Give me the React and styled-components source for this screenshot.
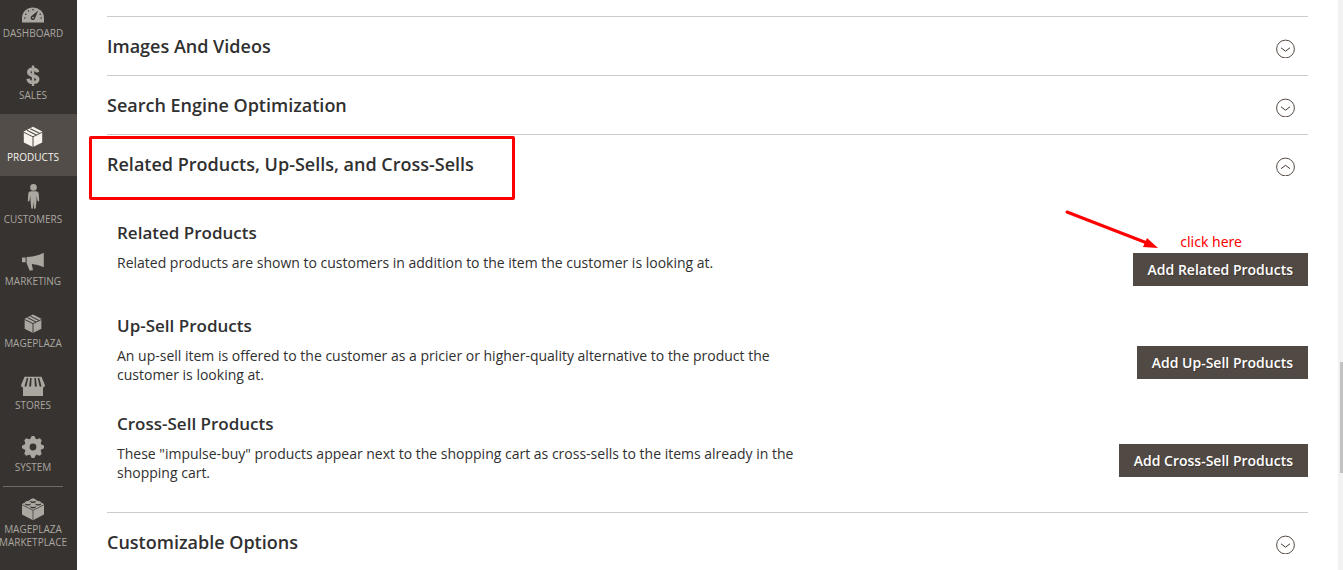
import { useState } from "react";
import styled, { createGlobalStyle } from "styled-components";

const GlobalStyle = createGlobalStyle`
  * {
    box-sizing: border-box;
  }

  body {
    margin: 0;
    background: #ffffff;
    color: #303030;
    font-family: "Open Sans", "Noto Sans", sans-serif;
    font-size: 14px;
  }
`;

const Page = styled.div`
  display: flex;
  height: 100vh;
  overflow: hidden;
`;

const Sidebar = styled.nav`
  flex: none;
  width: 77px;
  background: #373330;
  overflow: hidden;
`;

const MenuItem = styled.a`
  display: flex;
  flex-direction: column;
  align-items: center;
  gap: 3px;
  padding: ${(props) => (props.$first ? "2px" : "12px")} 11px 12px 0;
  background: ${(props) => (props.$active ? "#524d49" : "transparent")};
  color: ${(props) => (props.$active ? "#f7f3eb" : "#aaa6a0")};
  font-size: 10px;
  line-height: 13px;
  text-align: center;
  text-transform: uppercase;
  text-decoration: none;

  svg {
    display: block;
    width: 24px;
    height: 22px;
    overflow: visible;
  }
`;

const MenuLabel = styled.span`
  display: flex;
  flex-direction: column;
  align-items: center;
  width: 66px;
  white-space: nowrap;
`;

const MenuDivider = styled.div`
  height: 1px;
  margin: 0 14px -1px 3px;
  background: #736963;
`;

const Main = styled.main`
  flex: 1;
  min-width: 0;
  padding: 16px 30px 0;
`;

const Section = styled.section`
  border-top: 1px solid #cccccc;
`;

const SectionHeading = styled.h2`
  position: relative;
  margin: 0;
  font-size: 18px;
`;

const SectionToggle = styled.button`
  display: flex;
  align-items: center;
  justify-content: space-between;
  width: 100%;
  padding: 17px 13px 17px 0;
  border: none;
  background: none;
  color: #303030;
  font-family: inherit;
  font-size: 18px;
  font-weight: 600;
  line-height: 24px;
  text-align: left;
  cursor: pointer;

  svg {
    flex: none;
    width: 19px;
    height: 24px;
  }
`;

const Highlight = styled.span`
  position: absolute;
  top: 1px;
  left: -18px;
  width: 426px;
  height: 64px;
  border: 3px solid #fe0000;
  border-radius: 2px;
  pointer-events: none;
`;

const SectionBody = styled.div`
  padding: 30px 0 0 10px;
`;

const Fieldset = styled.div`
  padding-bottom: 30px;
`;

const FieldsetTitle = styled.h3`
  margin: 0 0 10px;
  font-size: 17px;
  font-weight: 600;
  line-height: 20px;
`;

const FieldsetRow = styled.div`
  display: flex;
  align-items: flex-start;
  justify-content: space-between;
`;

const Description = styled.p`
  max-width: 700px;
  margin: 0;
  line-height: 19px;
`;

const ActionWrapper = styled.div`
  position: relative;
  flex: none;
`;

const ActionButton = styled.button`
  display: block;
  height: 33px;
  padding: 0 15px;
  border: none;
  background: #514943;
  color: #ffffff;
  font-family: inherit;
  font-size: 14px;
  font-weight: 600;
  line-height: 19px;
  text-shadow: 1px 1px 0 rgba(0, 0, 0, 0.25);
  white-space: nowrap;
  cursor: pointer;
`;

const Note = styled.span`
  position: absolute;
  right: 66px;
  bottom: 35px;
  color: #fe0000;
  font-family: "Noto Sans", sans-serif;
  font-size: 14px;
  line-height: 18px;
  white-space: nowrap;
`;

const Arrow = styled.svg`
  position: absolute;
  right: 148px;
  bottom: 37px;
  width: 96px;
  height: 42px;
`;

const ScrollTrack = styled.div`
  flex: none;
  width: 5px;
  padding: 362px 0 0 2px;
  background: #f1f1f1;
`;

const ScrollThumb = styled.div`
  height: 111px;
  background: #c1c1c1;
`;

const DashboardIcon = ({ back }) => (
  <svg viewBox="0 -1 24 22" fill="currentColor">
    <path d="M1 19.500v-4.500a11 10.500 0 0 1 22 0v4.500z" />
    <g fill={back}>
      <path d="M17.200 7.600l-3.200 7.600a2.200 2.200 0 1 1-3.700-1.900z" />
      <circle cx="3.800" cy="15" r="0.800" />
      <circle cx="4.800" cy="11.200" r="0.800" />
      <circle cx="7.600" cy="8" r="0.800" />
      <circle cx="12" cy="6.700" r="0.800" />
      <circle cx="19.200" cy="11.200" r="0.800" />
      <circle cx="20.200" cy="15" r="0.800" />
    </g>
    <circle cx="12" cy="14.600" r="0.900" />
  </svg>
);

const SalesIcon = () => (
  <svg viewBox="0 0 24 22" fill="none" stroke="currentColor">
    <path d="M12 1.500v20.500" strokeWidth="2.400" />
    <path
      d="M16.600 8.300C16.300 6 14.500 5.200 12.200 5.200 9.400 5.200 7.700 6.200 7.700 8.200c0 4.600 9.100 2.500 9.100 7 0 2.200-1.900 3.200-4.700 3.200-2.900 0-4.700-1-5-3.700"
      strokeWidth="3.400"
    />
  </svg>
);

const BoxIcon = ({ back, small }) => (
  <svg
    viewBox={small ? "-1.200 -2 26.400 24.200" : "0 0 24 22"}
    fill="currentColor"
  >
    <path d="M12 .8l9.200 4.600v11L12 21l-9.200-4.600v-11z" />
    <g fill="none" stroke={back}>
      <path d="M2.600 6.200L12 10.800l9.400-4.600M12 10.800V21" strokeWidth="1" />
      <path d="M6 4.300l9.300 4.700M9.300 2.700l9.200 4.600" strokeWidth="1.100" />
    </g>
  </svg>
);

const CustomersIcon = () => (
  <svg viewBox="0 0 24 22" fill="currentColor">
    <circle cx="12.500" cy="-.6" r="3.300" />
    <path d="M10.200 3.300h4.600c1.900 0 2.800 1 2.900 2.500l.5 6.600c0 1.200-1.500 1.400-1.700.2L15.600 8l-.1 5-.7 6.800c-.2 1.500-1.700 1.500-1.800 0l-.5-6-.5 6c-.1 1.500-1.600 1.500-1.800 0L9.500 13l-.1-5-.9 4.600c-.2 1.200-1.700 1-1.700-.2l.5-6.600c.1-1.500 1-2.500 2.900-2.500z" />
  </svg>
);

const MarketingIcon = () => (
  <svg viewBox="0 -1 24 22" fill="currentColor">
    <path d="M1 6.500h3.600v4.700H1zM5.600 6C11 5.900 17 4.700 22.800 1.800v14.400c-4.300-1.900-8.300-2.800-11.800-3.200l-.2.200 1.200 6-3.400.4-3-7.500z" />
  </svg>
);

const StoresIcon = ({ back }) => (
  <svg viewBox="0 0 24 22" fill="currentColor">
    <path d="M3.500 2.800h17l3.400 8.200c0 1.600-.8 2.300-1.900 2.500v8.500H2v-8.500C.9 13.300.1 12.600.1 11z" />
    <g fill={back}>
      <path d="M5.800 4h1.500L5.600 11.800c-.3 1.200-1.800 1.200-2.100.1zM9.200 4h1.400L10.200 11.800c-.2 1.200-1.800 1.200-2.100.1zM13.400 4h1.400l1.100 7.900c-.3 1.100-1.900 1.100-2.100-.1zM16.700 4h1.500l2.300 7.900c-.3 1.100-1.800 1.100-2.100-.1z" />
    </g>
  </svg>
);

const SystemIcon = () => (
  <svg viewBox="0 0 24 22">
    <g fill="none" stroke="currentColor">
      <circle cx="12" cy="11" r="5.900" strokeWidth="5" />
    </g>
    <g fill="currentColor">
      {[0, 45, 90, 135, 180, 225, 270, 315].map((angle) => (
        <path
          key={angle}
          transform={`rotate(${angle} 12 11)`}
          d="M8.900 3.500L10.700 0h2.600l1.800 3.500z"
        />
      ))}
    </g>
  </svg>
);

const MarketplaceIcon = ({ back }) => (
  <svg viewBox="0 0 24 22" fill="currentColor">
    <path d="M12 .5l11 5.500v10.500L12 22.300 1 16.500V6z" />
    <path
      d="M1.200 6.800L12 12.400l10.800-5.600M12 12.400v9.900"
      fill="none"
      stroke={back}
      strokeWidth="0.700"
    />
    <g fill={back}>
      <ellipse cx="12" cy="3.400" rx="2.900" ry="1.600" />
      <ellipse cx="6.800" cy="6" rx="2.900" ry="1.600" />
      <ellipse cx="17.200" cy="6" rx="2.900" ry="1.600" />
      <ellipse cx="12" cy="8.800" rx="2.900" ry="1.600" />
    </g>
    <ellipse cx="12" cy="2" rx="2.900" ry="1.600" />
    <ellipse cx="6.800" cy="4.700" rx="2.900" ry="1.600" />
    <ellipse cx="17.200" cy="4.700" rx="2.900" ry="1.600" />
    <ellipse cx="12" cy="7.500" rx="2.900" ry="1.600" />
  </svg>
);

const ChevronCircle = ({ up }) => (
  <svg viewBox="0 0 19 24" fill="none" stroke="#41362f">
    <circle cx="9.500" cy="15" r="8.900" strokeWidth="0.900" />
    <path
      d={up ? "M5 16.700l4.500-3.400 4.500 3.400" : "M5 13.800l4.500 3.400 4.500-3.400"}
      strokeWidth="1"
    />
  </svg>
);

const menu = [
  { label: "Dashboard", Icon: DashboardIcon },
  { label: "Sales", Icon: SalesIcon },
  { label: "Products", Icon: BoxIcon, active: true },
  { label: "Customers", Icon: CustomersIcon },
  { label: "Marketing", Icon: MarketingIcon },
  { label: "Mageplaza", Icon: BoxIcon, small: true },
  { label: "Stores", Icon: StoresIcon },
  { label: "System", Icon: SystemIcon },
];

const fieldsets = [
  {
    title: "Related Products",
    text: "Related products are shown to customers in addition to the item the customer is looking at.",
    action: "Add Related Products",
    note: "click here",
  },
  {
    title: "Up-Sell Products",
    text: "An up-sell item is offered to the customer as a pricier or higher-quality alternative to the product the customer is looking at.",
    action: "Add Up-Sell Products",
  },
  {
    title: "Cross-Sell Products",
    text: 'These "impulse-buy" products appear next to the shopping cart as cross-sells to the items already in the shopping cart.',
    action: "Add Cross-Sell Products",
  },
];

function Collapsible({ title, open, onToggle, highlighted, children }) {
  return (
    <Section>
      <SectionHeading>
        <SectionToggle type="button" aria-expanded={open} onClick={onToggle}>
          {title}
          <ChevronCircle up={open} />
        </SectionToggle>
        {highlighted && <Highlight />}
      </SectionHeading>
      {open && children}
    </Section>
  );
}

function App() {
  const [relatedOpen, setRelatedOpen] = useState(true);

  return (
    <>
      <GlobalStyle />
      <Page>
        <Sidebar>
          {menu.map(({ label, Icon, active, small }, index) => (
            <MenuItem
              key={label}
              href="#"
              $first={index === 0}
              $active={active}
            >
              <Icon back={active ? "#524d49" : "#373330"} small={small} />
              <MenuLabel>{label}</MenuLabel>
            </MenuItem>
          ))}
          <MenuDivider />
          <MenuItem href="#">
            <MarketplaceIcon back="#373330" />
            <MenuLabel>
              <span>Mageplaza</span>
              <span>Marketplace</span>
            </MenuLabel>
          </MenuItem>
        </Sidebar>
        <Main>
          <Collapsible title="Images And Videos" open={false} />
          <Collapsible title="Search Engine Optimization" open={false} />
          <Collapsible
            title="Related Products, Up-Sells, and Cross-Sells"
            open={relatedOpen}
            onToggle={() => setRelatedOpen(!relatedOpen)}
            highlighted
          >
            <SectionBody>
              {fieldsets.map((item) => (
                <Fieldset key={item.title}>
                  <FieldsetTitle>{item.title}</FieldsetTitle>
                  <FieldsetRow>
                    <Description>{item.text}</Description>
                    <ActionWrapper>
                      <ActionButton type="button">{item.action}</ActionButton>
                      {item.note && (
                        <>
                          <Arrow viewBox="0 0 96 42">
                            <path
                              d="M3 5l80 31"
                              stroke="#fe0000"
                              strokeWidth="3"
                              strokeLinecap="round"
                            />
                            <path d="M83 31l11 10-15-1z" fill="#fe0000" />
                          </Arrow>
                          <Note>{item.note}</Note>
                        </>
                      )}
                    </ActionWrapper>
                  </FieldsetRow>
                </Fieldset>
              ))}
            </SectionBody>
          </Collapsible>
          <Collapsible title="Customizable Options" open={false} />
        </Main>
        <ScrollTrack>
          <ScrollThumb />
        </ScrollTrack>
      </Page>
    </>
  );
}

export default App;
